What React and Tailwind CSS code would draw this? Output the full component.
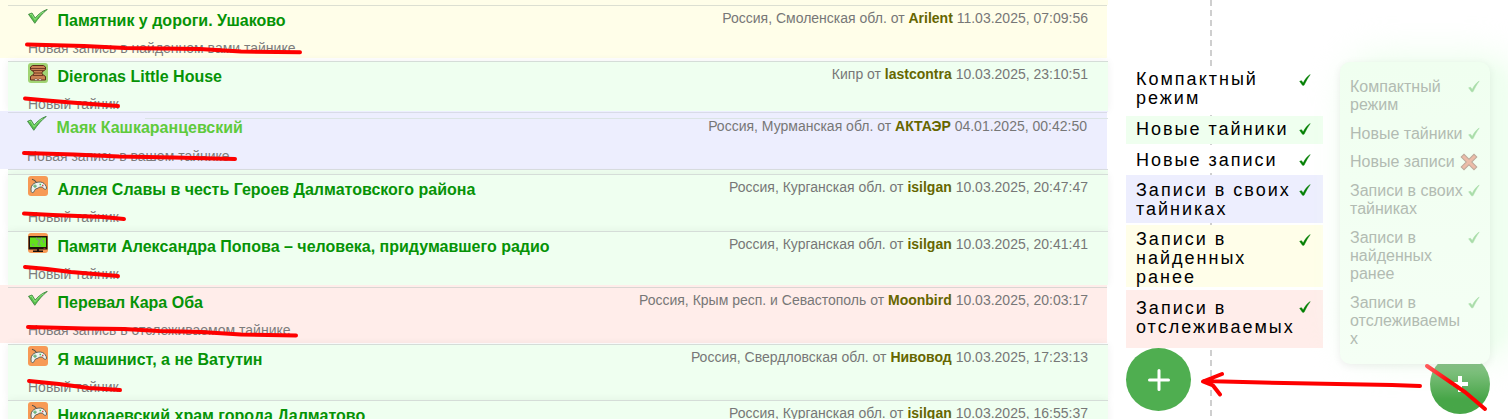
import React from 'react';

const ROWS = [
  { h: 'h-[56px]', bg: 'bg-[#fffee9]', line: 'border-[#dcdfd2]', icon: 'check', title: 'Памятник у дороги. Ушаково', sub: 'Новая запись в найденном вами тайнике', place: 'Россия, Смоленская обл.', user: 'Arilent', date: '11.03.2025, 07:09:56', wide: true, tail: 'border-b-[3px] border-b-white' },
  { h: 'h-[50px]', bg: 'bg-[#effff0]', line: 'border-[#d5ddd8]', icon: 'chest', title: 'Dieronas Little House', sub: 'Новый тайник', place: 'Кипр', user: 'lastcontra', date: '10.03.2025, 23:10:51' },
  { h: 'h-[57px]', bg: 'bg-[#edeefe]', line: 'border-[#d9dbe8]', icon: 'check', title: 'Маяк Кашкаранцевский', sub: 'Новая запись в вашем тайнике', place: 'Россия, Мурманская обл.', user: 'АКТАЭР', date: '04.01.2025, 00:42:50', wide: true, light: true },
  { h: 'h-[57px]', bg: 'bg-[#effff0]', line: 'border-[#d5ddd8]', icon: 'game', title: 'Аллея Славы в честь Героев Далматовского района', sub: 'Новый тайник', place: 'Россия, Курганская обл.', user: 'isilgan', date: '10.03.2025, 20:47:47' },
  { h: 'h-[54px]', bg: 'bg-[#effff0]', line: 'border-[#d5ddd8]', icon: 'tv', title: 'Памяти Александра Попова – человека, придумавшего радио', sub: 'Новый тайник', place: 'Россия, Курганская обл.', user: 'isilgan', date: '10.03.2025, 20:41:41' },
  { h: 'h-[57px]', bg: 'bg-[#ffedea]', line: 'border-[#d9d6d2]', icon: 'check', title: 'Перевал Кара Оба', sub: 'Новая запись в отслеживаемом тайнике', place: 'Россия, Крым респ. и Севастополь', user: 'Moonbird', date: '10.03.2025, 20:03:17', wide: true, tail: 'border-b border-b-white' },
  { h: 'h-[56px]', bg: 'bg-[#effff0]', line: 'border-[#d5ddd8]', icon: 'game', title: 'Я машинист, а не Ватутин', sub: 'Новый тайник', place: 'Россия, Свердловская обл.', user: 'Нивовод', date: '10.03.2025, 17:23:13' },
  { h: 'h-[57px]', bg: 'bg-[#effff0]', line: 'border-[#d5ddd8]', icon: 'game', title: 'Николаевский храм города Далматово', sub: 'Новый тайник', place: 'Россия, Курганская обл.', user: 'isilgan', date: '10.03.2025, 16:55:37' },
];

function RowIcon({ kind }) {
  if (kind === 'check')
    return (
      <svg viewBox="0 0 20 20" className="h-5 w-5">
        <path d="M.5 5.300 4 4l3.200 5C10.500 5 14.500 2 19.400.3 14.500 4.200 10.500 9 6.800 14.300Z" fill="#58c04c" stroke="#37803a" strokeWidth=".8" strokeLinejoin="round" />
        <path d="m2 5.600 1.600-.5 3.400 5.600C10 7 12.500 4.500 15.500 2.800" fill="none" stroke="#93e583" strokeWidth="1" />
      </svg>
    );
  if (kind === 'chest')
    return (
      <svg viewBox="0 0 20 20" className="h-5 w-5">
        <rect width="20" height="20" rx="3" fill="#a1d473" />
        <path d="M4.500 2.500h11L17.500 4v2.500L14 9v2l3.500 2.500V17h-15v-3.500L6 11V9L2.500 6.500V4Z" fill="#c98254" stroke="#5d2c18" />
        <path d="M3 5.500h14M4 7.500h12M6.500 10h7M5 12.500h10" fill="none" stroke="#6b3520" strokeWidth=".9" />
        <path d="M6.500 17.500v-1.500h2l1.500 1 1.500-1h2v1.500Z" fill="#fff" stroke="#5d2c18" strokeWidth=".5" />
      </svg>
    );
  if (kind === 'tv')
    return (
      <svg viewBox="0 0 20 20" className="h-5 w-5">
        <rect width="20" height="20" rx="3" fill="#f79a55" />
        <path d="M.5 3h19v13.500H.5zM9 16h2v2H9zM5 17.500h10V19H5z" fill="#1c100c" />
        <path d="M2 4.500h16V14H2z" fill="#62e01c" />
        <path d="m8 5 3 2.500L14 5M12 8l-2 3 3 2M15 7l1 3M4 11l2 1.500" stroke="#7d9c78" strokeWidth="1.400" fill="none" />
        <path d="M15.500 15.300h2" stroke="#e03030" strokeWidth=".8" />
      </svg>
    );
  return (
    <svg viewBox="0 0 20 20" className="h-5 w-5">
      <rect width="20" height="20" rx="3" fill="#f79a55" />
      <path d="M4 3.200c2 .5 3.500 1.800 4.500 3.300" stroke="#4d4d4d" strokeWidth="1.100" fill="none" />
      <path d="M3.200 15.500C2.500 12 3.500 9 6 7.500c2-1.300 6-2 8.500-1 2 .8 4 3.500 4 5.500 0 1.500-1.500 1.800-2.500.7l-1.700-1.500c-1.800-.5-3.300 0-4.300 1L7.500 13c-1 .8-1 2.500-2 3.300-.8.6-2 .2-2.300-.8Z" fill="#eef3f1" stroke="#4f5753" strokeWidth=".9" />
      <path d="M7 8.500v3.500M5.200 10.200h3.600" stroke="#5fae72" strokeWidth="1.200" />
      <path d="M11.500 8.500h1.600" stroke="#46c653" strokeWidth="1.500" />
      <path d="M14 9.500h1.500" stroke="#d05048" strokeWidth="1.500" />
    </svg>
  );
}

function Row({ row }) {
  return (
    <div className={`shrink-0 ${row.h} ${row.wide ? 'w-[1107px] pl-2' : 'ml-2 w-[1100px] shadow-[0_0_8px_rgba(0,0,0,0.06)]'} ${row.bg} ${row.tail || ''}`}>
      <div className={`flex h-full justify-between overflow-hidden border-t pl-5 ${row.wide && !row.light ? 'pr-[19px]' : 'pr-5'} ${row.line}`}>
        <div className={`flex flex-col ${row.light ? '-ml-px' : ''}`}>
          <div className="flex">
            <div className={row.icon === 'check' ? 'pt-[3px]' : 'pt-px'}><RowIcon kind={row.icon} /></div>
            <div className={`pl-[9.500px] pt-[5px] text-[16px] leading-5 font-bold whitespace-nowrap ${row.light ? 'text-[#5fca3c]' : 'text-[#069306]'}`}>{row.title}</div>
          </div>
          <div className={`text-[14px] leading-4 whitespace-nowrap text-[#7c7c7c] ${row.light ? 'pt-[10px]' : 'pt-[9px]'}`}>{row.sub}</div>
        </div>
        <div className={`text-[14px] leading-4 whitespace-nowrap text-[#777] ${row.light ? 'pt-[5px]' : 'pt-[4px]'}`}>
          {row.place} от <b className="text-[#666600]">{row.user}</b> {row.date}
        </div>
      </div>
    </div>
  );
}

const Tick = ({ className }) => (
  <svg viewBox="0 0 12 12" className={className}>
    <path d="M.7 7.300 2.500 6.700 4.200 9C6 5.500 8.300 2.200 11.200.6 8.800 3.800 6.800 7.500 5 11.300H3.500Z" fill="currentColor" stroke="currentColor" strokeWidth=".5" strokeLinejoin="round" />
  </svg>
);

const LEFT = [
  { lines: ['Компактный', 'режим'], cls: 'h-[48px] bg-white pt-[3px]', tick: 'mt-[4px]' },
  { lines: ['Новые тайники'], cls: 'mt-px h-[28px] bg-[#efffef] pt-[4px]', tick: 'mt-[3px]' },
  { lines: ['Новые записи'], cls: 'mt-px h-[28px] bg-white pt-[6px]', tick: 'mt-[3px]' },
  { lines: ['Записи в своих', 'тайниках'], cls: 'mt-[2px] h-[48px] bg-[#edeefe] pt-[6px]', tick: 'mt-[3px]' },
  { lines: ['Записи в', 'найденных', 'ранее'], cls: 'mt-[2px] h-[62px] bg-[#fffee9] pt-[5px]', tick: 'mt-[4px]' },
  { lines: ['Записи в', 'отслеживаемых'], cls: 'mt-[3px] h-[58px] bg-[#ffedea] pt-[9px]', tick: 'mt-[2px]' },
];

const RIGHT = [
  { lines: ['Компактный', 'режим'], mb: 'mb-[11px]' },
  { lines: ['Новые тайники'], mb: 'mb-[10px]' },
  { lines: ['Новые записи'], mb: 'mb-[11px]', off: true },
  { lines: ['Записи в своих', 'тайниках'], mb: 'mb-[11px]' },
  { lines: ['Записи в', 'найденных', 'ранее'], mb: 'mb-[11px]' },
  { lines: ['Записи в', 'отслеживаемы', 'х'], mb: '' },
];

export default function App() {
  return (
    <div className="relative flex h-[419px] w-[1508px] overflow-hidden bg-white font-['Liberation_Sans',Arial,sans-serif]">
      <div className="flex w-[1126px] shrink-0 flex-col">
        <div className="ml-0 h-[5px] w-[1108px] shrink-0 bg-[#fffee9]" />
        <Row row={ROWS[0]} />
        <Row row={ROWS[1]} />
        <div className="relative h-px w-[1108px] shrink-0 bg-[#edeefe]">
          <div className="absolute left-[145px] top-[7px] h-px w-[963px] bg-[#dbe4e4]" />
        </div>
        <Row row={ROWS[2]} />
        <div className="ml-2 h-[5px] w-[1100px] shrink-0 border-t border-[#d9dde0] bg-[#effff0]" />
        <Row row={ROWS[3]} />
        <Row row={ROWS[4]} />
        <div className="h-[2px] w-[1107px] shrink-0 bg-[#ffedea]" />
        {ROWS.slice(5).map((r) => <Row key={r.date} row={r} />)}
      </div>

      <div className="relative w-[197px] shrink-0">
        <div className="absolute left-[84px] top-0 h-full w-[2px] bg-[repeating-linear-gradient(to_bottom,#cfcfcf_0_6px,transparent_6px_10px)]" />
        <div className="relative flex flex-col pt-[67px]">
          {LEFT.map((it) => (
            <div key={it.lines.join()} className={`flex shrink-0 justify-between pl-[10px] pr-[12px] text-[18px] leading-[19px] tracking-[2px] whitespace-nowrap text-black ${it.cls}`}>
              <div className="w-0">{it.lines.map((l) => <div key={l}>{l}</div>)}</div>
              <Tick className={`h-[12px] w-[12px] text-[#007f00] ${it.tick}`} />
            </div>
          ))}
          <div className="flex h-[63px] w-[65px] items-center justify-center rounded-[50%] bg-[#4fae50]">
            <svg viewBox="0 0 22 22" className="h-[22px] w-[22px]"><path d="M11 1.500v19M1.500 11h19" stroke="#fff" strokeWidth="3" strokeLinecap="round" /></svg>
          </div>
        </div>
      </div>

      <div className="relative flex flex-1 flex-col pl-[17px] pt-[62px]">
        <div className="absolute left-[30px] top-[62px] h-[290px] w-[158px] rounded-[30px] bg-[#effff0] shadow-[0_0_30px_12px_rgba(239,255,240,0.9)] blur-[6px]" />
        <div className="relative z-10 h-[302px] w-[150px] rounded-[10px] bg-[#f3fff3] bg-linear-to-b from-[#f0fff0] to-[#f5fff5] pl-[10px] pr-[10px] pt-[16px] shadow-[0_2px_8px_rgba(0,0,0,0.07)]">
          {RIGHT.map((it) => (
            <div key={it.lines.join()} className={`flex justify-between text-[16px] leading-[18px] whitespace-nowrap text-[#b2bbb2] ${it.mb}`}>
              <div className="w-0">{it.lines.map((l) => <div key={l}>{l}</div>)}</div>
              {it.off ? (
                <svg viewBox="0 0 18 18" className="mr-[2px] h-[18px] w-[18px]">
                  <path d="m4 4 10 10M14 4 4 14" stroke="#bca99a" strokeWidth="5" strokeLinecap="square" />
                  <path d="m4 4 10 10M14 4 4 14" stroke="#ecbca8" strokeWidth="3" strokeLinecap="square" />
                </svg>
              ) : (
                <Tick className="mt-[2px] h-[13px] w-[12px] text-[#a9dda9]" />
              )}
            </div>
          ))}
        </div>
        <div className="relative ml-[90px] -mt-[10px] flex h-[60px] w-[60px] shrink-0 items-center justify-center rounded-full bg-linear-to-b from-[#9bcf9b] to-[#47a648] to-75%">
          <svg viewBox="0 0 16 16" className="h-4 w-4"><path d="M8 0v16M0 8h16" stroke="#fff" strokeWidth="4" /></svg>
        </div>
      </div>

      <svg viewBox="0 0 1508 419" className="pointer-events-none absolute inset-0 z-20 h-full w-full" fill="none" stroke="#fe0000" strokeWidth="4" strokeLinecap="round" strokeLinejoin="round">
        <path d="M27 44.500 84 46l41 2 75 1 41 2.500 59 .8" />
        <path d="m25 98.500 22 2 24 2 47 3.500" />
        <path d="m24 153 50 1.500 45 2 55 1 61 1.500" />
        <path d="m24 213.500 29 1.500 50 2 21 2" />
        <path d="m25 267 22 2 24 3 47 4" />
        <path d="m28 327 57 1.500 39 .5 35 2 42 1 40 2.500 55 1" />
        <path d="m29 381 30 3 30 4 31 2" />
        <path d="m1420 386-28-1-55-1-53-1-80-2M1222 374l-19 7.500 10 4 7 9" />
      </svg>
      <svg viewBox="0 0 1508 419" className="pointer-events-none absolute inset-0 z-20 h-full w-full" fill="none">
        <defs>
          <linearGradient id="fade" gradientUnits="userSpaceOnUse" x1="1427" y1="366" x2="1450" y2="383">
            <stop offset="0" stopColor="#ff5a5a" />
            <stop offset="1" stopColor="#fe0000" />
          </linearGradient>
        </defs>
        <path d="m1427 366 38 26 20 17" stroke="url(#fade)" strokeWidth="4" strokeLinecap="round" />
      </svg>
    </div>
  );
}
